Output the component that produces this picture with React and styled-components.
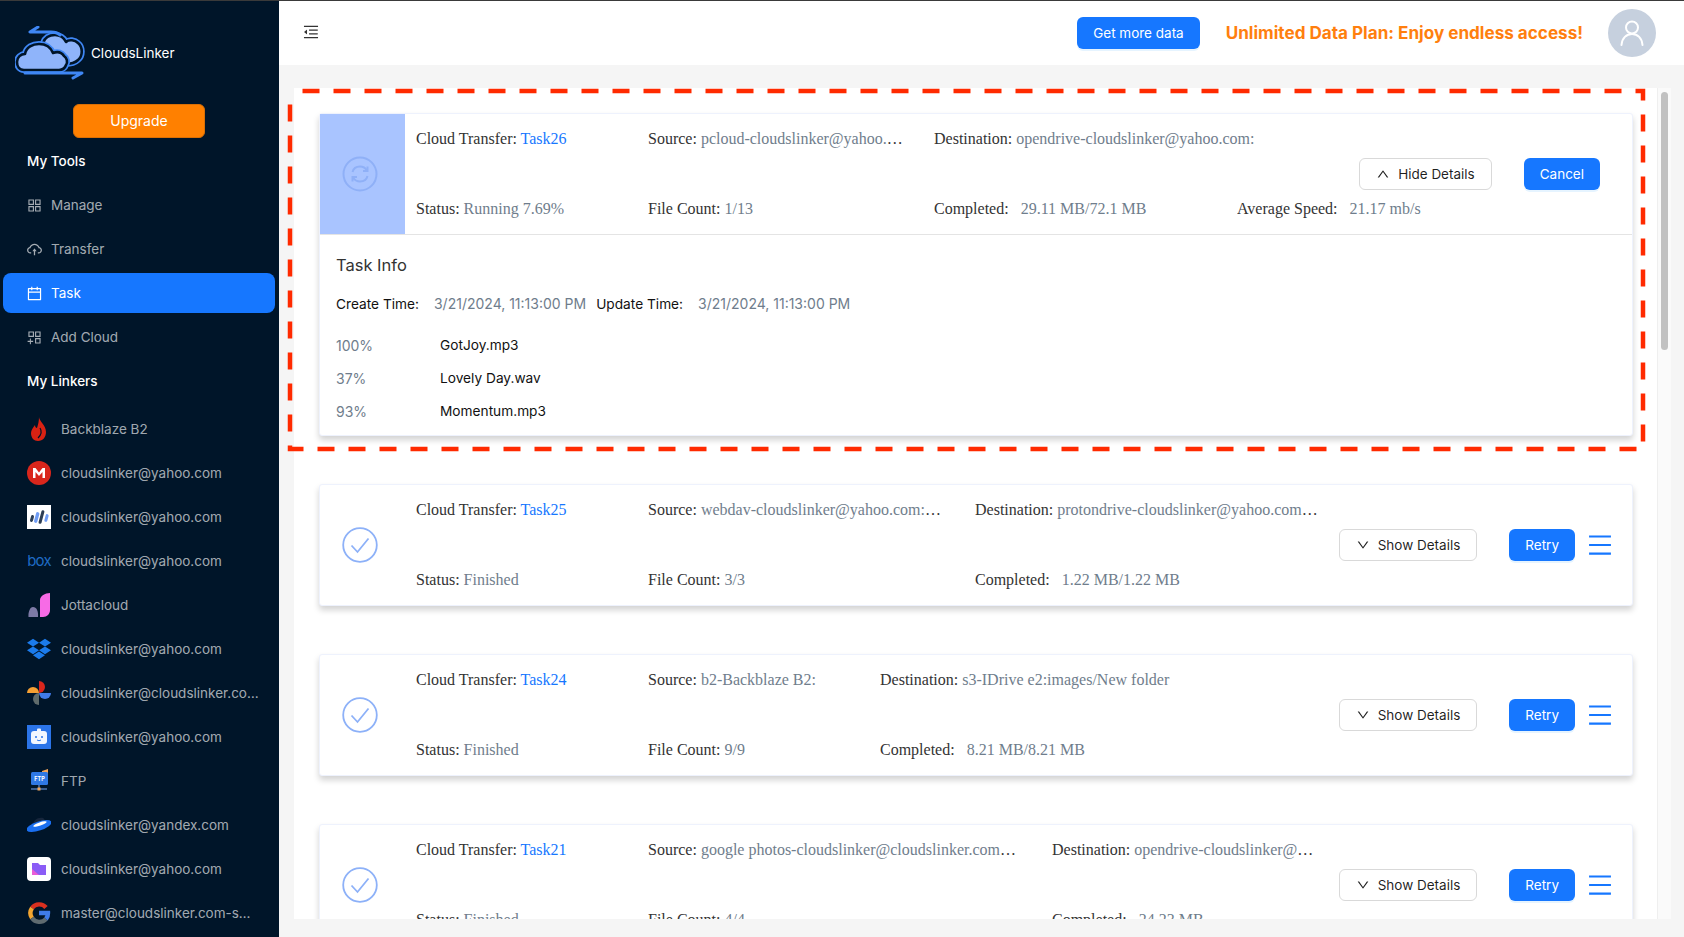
import React from 'react'
import styled, { createGlobalStyle } from 'styled-components'
import { AiOutlineAppstore, AiOutlineCloudUpload, AiOutlineCalendar, AiOutlineAppstoreAdd, AiOutlineMenuFold, AiOutlineUp, AiOutlineDown, AiOutlineMenu } from 'react-icons/ai'
import { FaDropbox } from 'react-icons/fa'

const GlobalStyle = createGlobalStyle`
  * { box-sizing: border-box; }
  html, body { margin: 0; height: 100%; overflow: hidden; }
  body { font-family: Inter, "Liberation Sans", sans-serif; font-size: 13.5px; background: #f5f5f5; }
`

const FRONT_CLOUD = 'M9 44 C4 44 2 40 2 36 C2 31 6 28 10 28 C11 21 18 18 24 18 C31 18 36 22 38 27 C43 25 47 27 49 30 C52 32 53 36 51 39 C50 42 47 44 44 44 Z'
const BACK_CLOUD = 'M28 17 C30 11 35 9 40 9 C45 9 49 12 51 16 C54 13 60 14 63 17 C68 21 68 30 63 34 C60 37 56 38 50 38 L34 38 Z'

const Logo = () => (
  <svg width="72" height="54" viewBox="0 0 72 54" fill="none">
    <path d={BACK_CLOUD} fill="#3f87f5" stroke="#3f87f5" strokeWidth="6" strokeLinejoin="round" />
    <path d={BACK_CLOUD} fill="#8fb4fa" stroke="#001529" strokeWidth="2.6" strokeLinejoin="round" />
    <path d={FRONT_CLOUD} fill="#3f87f5" stroke="#3f87f5" strokeWidth="6" strokeLinejoin="round" />
    <path d={FRONT_CLOUD} fill="#8fb4fa" stroke="#001529" strokeWidth="2.6" strokeLinejoin="round" />
    <path d="M23 1 L15 6 H36 C40 6 43 7 45 9" stroke="#3f87f5" strokeWidth="3" strokeLinecap="round" strokeLinejoin="round" />
    <path d="M10 47 H67 L58 52" stroke="#3f87f5" strokeWidth="3" strokeLinecap="round" strokeLinejoin="round" />
  </svg>
)

const IconBackblaze = () => (
  <svg width="24" height="24" viewBox="0 0 24 24">
    <path d="M12 0 C12 4 19 8 19 15 C19 20 16 24 11 24 C7 24 4 21 4 16 C4 13 6 11 8 8 C8 10 9 11 10 11 C11 8 12 4 12 0 Z" fill="#d92213" />
    <path d="M13 11 C15 14 14 18 11 21" stroke="#001529" strokeWidth="1.2" fill="none" />
  </svg>
)

const IconMega = () => (
  <svg width="24" height="24" viewBox="0 0 24 24">
    <circle cx="12" cy="12" r="12" fill="#d9261c" />
    <path d="M6 17 V7 H8.5 L12 11.5 L15.5 7 H18 V17 H15.5 V11 L12 15 L8.5 11 V17 Z" fill="#fff" />
  </svg>
)

const IconBars = () => (
  <svg width="24" height="24" viewBox="0 0 24 24">
    <rect width="24" height="24" fill="#fff" />
    <rect x="3.5" y="10" width="3" height="7" rx="1.5" fill="#2c3e55" transform="rotate(15 5 13.5)" />
    <rect x="8" y="7" width="3.4" height="11" rx="1.7" fill="#6f9cf4" transform="rotate(15 9.7 12.5)" />
    <rect x="13" y="5" width="3" height="14" rx="1.5" fill="#2c3e55" transform="rotate(15 14.5 12)" />
    <rect x="18" y="9" width="3" height="8" rx="1.5" fill="#6f9cf4" transform="rotate(15 19.5 13)" />
  </svg>
)

const BoxMark = styled.span`
  width: 24px;
  text-align: center;
  font-size: 15px;
  line-height: 24px;
  letter-spacing: -0.8px;
  color: #1f6bc4;
`

const IconJotta = () => (
  <svg width="24" height="24" viewBox="0 0 24 24">
    <path d="M13 7 C13 3 18 0 23 0 V17 C23 21 20 24 16 24 H13 Z" fill="#f76be6" />
    <path d="M1.5 24 C1 19 3 14 6 14 C9.5 14 11.5 18 11 24 Z" fill="#7d7aa6" />
  </svg>
)

const IconPhotos = () => (
  <svg width="24" height="24" viewBox="0 0 24 24">
    <path d="M0 12 A6 6 0 0 1 12 12 Z" fill="#f5a033" />
    <path d="M12 12 A6 6 0 0 0 12 0 Z" fill="#d9261c" />
    <path d="M12 12 A6 6 0 0 0 24 12 Z" fill="#3f7be8" />
    <path d="M12 12 A6 6 0 0 0 12 24 Z" fill="#5f6b6b" />
  </svg>
)

const IconRobot = () => (
  <svg width="24" height="24" viewBox="0 0 24 24">
    <rect width="24" height="24" fill="#2b74e8" />
    <rect x="4" y="6" width="16" height="13" rx="3" fill="#f3f7ff" />
    <rect x="10" y="3.5" width="4" height="4" rx="1" fill="#f3f7ff" />
    <circle cx="9" cy="12" r="1" fill="#2b74e8" />
    <circle cx="15" cy="12" r="1" fill="#2b74e8" />
    <path d="M10 15 Q12 16.5 14 15" stroke="#2b74e8" fill="none" />
  </svg>
)

const IconFtp = () => (
  <svg width="24" height="24" viewBox="0 0 24 24">
    <path d="M15 2 L21 0 V6 H15 Z" fill="#f2a65a" />
    <rect x="4" y="3" width="17" height="13" rx="1.5" fill="#2f78e4" />
    <text x="12.5" y="12" fontSize="5.5" fontWeight="700" fill="#fff" textAnchor="middle" fontFamily="Inter, sans-serif">FTP</text>
    <path d="M12 16 V20 M4 20 H20" stroke="#7aa7f0" strokeWidth="1" />
    <rect x="10.5" y="18.5" width="3" height="3" fill="#f2a65a" />
  </svg>
)

const IconYandex = () => (
  <svg width="24" height="24" viewBox="0 0 24 24">
    <path d="M5 14 C6 7 11 4 16 5 C18 6 18 8 17 9 Z" fill="#16263c" />
    <ellipse cx="12" cy="13" rx="13" ry="4.6" fill="#1a6ff0" transform="rotate(-18 12 13)" />
    <ellipse cx="13" cy="11" rx="7" ry="1.7" fill="#fff" transform="rotate(-18 13 11)" />
  </svg>
)

const IconFolder = () => (
  <svg width="24" height="24" viewBox="0 0 24 24">
    <rect width="24" height="24" rx="4" fill="#fff" />
    <path d="M5 6 H11 L13 8 H19 V18 H5 Z" fill="#8b5cf6" />
    <path d="M5 12 L12 18 H5 Z" fill="#e85cd6" />
  </svg>
)

const IconGoogle = () => (
  <svg width="24" height="24" viewBox="0 0 24 24" fill="none" strokeWidth="4.4">
    <path d="M5 7 A9 9 0 0 1 19 6.5" stroke="#d9301f" />
    <path d="M5 7 A9 9 0 0 0 5 17" stroke="#f3a530" />
    <path d="M5 17 A9 9 0 0 0 19 18" stroke="#5f6b70" />
    <path d="M19 18 A9 9 0 0 0 21 12 H12" stroke="#3f7be8" />
  </svg>
)

const SyncCircle = () => (
  <svg width="36" height="36" viewBox="0 0 36 36" fill="none" stroke="#8fb0f7" strokeWidth="2">
    <circle cx="18" cy="18" r="16.5" />
    <path d="M10.5 16 C11.5 12 15 10.5 18 10.5 C21 10.5 23.5 12 25 14.5" />
    <path d="M25.5 10.5 V15 H21" />
    <path d="M25.5 20 C24.5 24 21 25.5 18 25.5 C15 25.5 12.5 24 11 21.5" />
    <path d="M10.5 25.5 V21 H15" />
  </svg>
)

const CheckCircle = () => (
  <svg width="36" height="36" viewBox="0 0 36 36" fill="none" stroke="#8db1f8" strokeWidth="1.8">
    <circle cx="18" cy="18" r="16.8" />
    <path d="M9.5 18.5 L15.5 25 L26.5 11.5" />
  </svg>
)

const tools = [
  { label: 'Manage', Icon: AiOutlineAppstore },
  { label: 'Transfer', Icon: AiOutlineCloudUpload },
  { label: 'Task', Icon: AiOutlineCalendar, active: true },
  { label: 'Add Cloud', Icon: AiOutlineAppstoreAdd },
]

const linkers = [
  { label: 'Backblaze B2', icon: <IconBackblaze /> },
  { label: 'cloudslinker@yahoo.com', icon: <IconMega /> },
  { label: 'cloudslinker@yahoo.com', icon: <IconBars /> },
  { label: 'cloudslinker@yahoo.com', icon: <BoxMark>box</BoxMark> },
  { label: 'Jottacloud', icon: <IconJotta /> },
  { label: 'cloudslinker@yahoo.com', icon: <FaDropbox size={24} color="#1b7bec" /> },
  { label: 'cloudslinker@cloudslinker.com-photos', icon: <IconPhotos /> },
  { label: 'cloudslinker@yahoo.com', icon: <IconRobot /> },
  { label: 'FTP', icon: <IconFtp /> },
  { label: 'cloudslinker@yandex.com', icon: <IconYandex /> },
  { label: 'cloudslinker@yahoo.com', icon: <IconFolder /> },
  { label: 'master@cloudslinker.com-smtp', icon: <IconGoogle /> },
]

const tasks = [
  {
    name: 'Task25', cols: '232px 327px 379px',
    source: 'webdav-cloudslinker@yahoo.com:/backup/music',
    dest: 'protondrive-cloudslinker@yahoo.com:/backup/music',
    files: '3/3', done: '1.22 MB/1.22 MB',
  },
  {
    name: 'Task24', cols: '232px 232px 400px',
    source: 'b2-Backblaze B2:',
    dest: 's3-IDrive e2:images/New folder',
    files: '9/9', done: '8.21 MB/8.21 MB',
  },
  {
    name: 'Task21', cols: '232px 404px 300px',
    source: 'google photos-cloudslinker@cloudslinker.com:/album/2024',
    dest: 'opendrive-cloudslinker@yahoo.com:/photos',
    files: '4/4', done: '24.23 MB',
  },
]

const files = [
  { pct: '100%', name: 'GotJoy.mp3' },
  { pct: '37%', name: 'Lovely Day.wav' },
  { pct: '93%', name: 'Momentum.mp3' },
]

const Field = ({ label, value, spaced, span, tight }) => (
  <Cell $span={span} $tight={tight}>
    {label}: <Value $spaced={spaced}>{value}</Value>
  </Cell>
)

const App = () => {
  return (
    <Page>
      <GlobalStyle />
      <Sidebar>
        <Brand>
          <Logo />
          <BrandName>CloudsLinker</BrandName>
        </Brand>
        <UpgradeButton>Upgrade</UpgradeButton>
        <Nav>
          <NavTitle>My Tools</NavTitle>
          {tools.map(({ label, Icon, active }) => (
            <NavItem key={label} $active={active}>
              <Icon size={17} />
              {label}
            </NavItem>
          ))}
          <NavTitle>My Linkers</NavTitle>
          <LinkerList>
            {linkers.map((l, i) => (
              <LinkerItem key={i}>
                <LinkerIcon>{l.icon}</LinkerIcon>
                <LinkerLabel>{l.label}</LinkerLabel>
              </LinkerItem>
            ))}
          </LinkerList>
        </Nav>
      </Sidebar>

      <Main>
        <Header>
          <FoldButton><AiOutlineMenuFold size={18} /></FoldButton>
          <HeaderRight>
            <PrimaryButton>Get more data</PrimaryButton>
            <Promo>Unlimited Data Plan: Enjoy endless access!</Promo>
            <Avatar>
              <svg width="26" height="28" viewBox="0 0 26 28" fill="none" stroke="#fff" strokeWidth="2">
                <circle cx="13" cy="8.5" r="6" />
                <path d="M2.5 26 C3 19 7.5 15 13 15 C18.5 15 23 19 23.5 26" strokeLinecap="round" />
              </svg>
            </Avatar>
          </HeaderRight>
        </Header>

        <Content>
          <Panel>
            <TaskCard>
              <CardHead>
                <Thumb $running><SyncCircle /></Thumb>
                <Info $cols="232px 286px 303px auto">
                  <Cell>Cloud Transfer: <TaskLink>Task26</TaskLink></Cell>
                  <Field label="Source" value="pcloud-cloudslinker@yahoo.com:/music/albums" tight />
                  <Field label="Destination" value="opendrive-cloudslinker@yahoo.com:" span />
                  <Field label="Status" value="Running 7.69%" />
                  <Field label="File Count" value="1/13" />
                  <Field label="Completed" value="29.11 MB/72.1 MB" spaced />
                  <Field label="Average Speed" value="21.17 mb/s" spaced />
                </Info>
                <Actions>
                  <OutlineButton><AiOutlineUp size={14} />Hide Details</OutlineButton>
                  <PrimaryButton>Cancel</PrimaryButton>
                </Actions>
              </CardHead>
              <Details>
                <DetailsTitle>Task Info</DetailsTitle>
                <TimeRow>
                  <span>Create Time:</span>
                  <TimeValue>3/21/2024, 11:13:00 PM</TimeValue>
                  <span>Update Time:</span>
                  <TimeValue>3/21/2024, 11:13:00 PM</TimeValue>
                </TimeRow>
                <FileList>
                  {files.map((f) => (
                    <FileRow key={f.name}>
                      <FilePct>{f.pct}</FilePct>
                      <span>{f.name}</span>
                    </FileRow>
                  ))}
                </FileList>
              </Details>
            </TaskCard>

            {tasks.map((t) => (
              <TaskCard key={t.name}>
                <CardHead>
                  <Thumb><CheckCircle /></Thumb>
                  <Info $cols={t.cols}>
                    <Cell>Cloud Transfer: <TaskLink>{t.name}</TaskLink></Cell>
                    <Field label="Source" value={t.source} />
                    <Field label="Destination" value={t.dest} />
                    <Field label="Status" value="Finished" />
                    <Field label="File Count" value={t.files} />
                    <Field label="Completed" value={t.done} spaced />
                  </Info>
                  <Actions $menu>
                    <OutlineButton><AiOutlineDown size={14} />Show Details</OutlineButton>
                    <PrimaryButton>Retry</PrimaryButton>
                    <MenuButton><AiOutlineMenu size={28} /></MenuButton>
                  </Actions>
                </CardHead>
              </TaskCard>
            ))}
          </Panel>
          <ScrollTrack><ScrollThumb /></ScrollTrack>
          <Highlight width="1364" height="368" viewBox="0 0 1364 368" fill="none">
            <rect x="6" y="5" width="1353" height="358" stroke="#ff2a00" strokeWidth="4.5" strokeDasharray="17 14" strokeDashoffset="18.5" />
          </Highlight>
        </Content>
      </Main>
    </Page>
  )
}

export default App

const Page = styled.div`
  display: flex;
  height: 100vh;
  border-top: 1px solid #3a3a3a;
  overflow: hidden;
`
const Sidebar = styled.aside`
  flex: 0 0 279px;
  background: #001529;
  padding: 25px 4px 0 3px;
  display: flex;
  flex-direction: column;
  overflow: hidden;
`
const Brand = styled.div`
  display: flex;
  align-items: center;
  gap: 4px;
  padding-left: 12px;
  height: 54px;
`
const BrandName = styled.span`
  color: #fff;
  font-size: 13.5px;
`
const UpgradeButton = styled.button`
  align-self: center;
  width: 132px;
  height: 34px;
  margin-top: 24px;
  padding-bottom: 2px;
  border: 1px solid #d96f05;
  border-radius: 6px;
  background: #ff8000;
  color: #fff;
  font: 14px Inter, sans-serif;
  flex: none;
`
const Nav = styled.nav`
  display: flex;
  flex-direction: column;
  gap: 4px;
  margin-top: 3px;
`
const NavTitle = styled.div`
  height: 40px;
  padding-left: 24px;
  line-height: 40px;
  color: #fff;
  font-weight: 500;
`
const NavItem = styled.div`
  display: flex;
  align-items: center;
  gap: 8px;
  height: 40px;
  padding-left: 23px;
  border-radius: 8px;
  color: ${(p) => (p.$active ? '#fff' : 'rgba(255, 255, 255, 0.65)')};
  background: ${(p) => (p.$active ? '#1677ff' : 'transparent')};
`
const LinkerList = styled.div`
  display: flex;
  flex-direction: column;
  gap: 4px;
  margin-top: 4px;
`
const LinkerItem = styled.div`
  display: flex;
  align-items: center;
  gap: 10px;
  height: 40px;
  padding: 0 16px 0 24px;
  color: rgba(255, 255, 255, 0.65);
`
const LinkerIcon = styled.span`
  flex: 0 0 24px;
  height: 24px;
  display: flex;
`
const LinkerLabel = styled.span`
  overflow: hidden;
  white-space: nowrap;
  text-overflow: ellipsis;
`
const Main = styled.div`
  flex: 1;
  min-width: 0;
  display: flex;
  flex-direction: column;
`
const Header = styled.header`
  flex: 0 0 64px;
  display: flex;
  align-items: center;
  justify-content: space-between;
  padding: 0 28px 0 23px;
  background: #fff;
`
const FoldButton = styled.span`
  display: flex;
  margin-bottom: 2px;
  color: #333;
`
const HeaderRight = styled.div`
  display: flex;
  align-items: center;
  gap: 25px;
`
const PrimaryButton = styled.button`
  height: 32px;
  padding: 0 16px;
  border: 0;
  border-radius: 6px;
  background: #1677ff;
  color: #fff;
  font: 13.5px Inter, sans-serif;
  box-shadow: 0 2px 0 rgba(5, 145, 255, 0.1);
`
const Promo = styled.span`
  margin: 0 0 2px 1px;
  color: #ff7f0e;
  font-size: 17.1px;
  font-weight: 700;
  white-space: nowrap;
`
const Avatar = styled.div`
  width: 48px;
  height: 48px;
  border-radius: 50%;
  background: #c6d0de;
  display: flex;
  align-items: center;
  justify-content: center;
`
const Content = styled.main`
  position: relative;
  flex: 1;
  min-height: 0;
  display: flex;
  padding: 23px 13px 18px 15px;
  background: #f5f5f5;
`
const Panel = styled.div`
  flex: 1;
  min-width: 0;
  display: flex;
  flex-direction: column;
  gap: 48px;
  padding: 25px 24px 25px 25px;
  background: #fff;
  overflow: hidden;
`
const ScrollTrack = styled.div`
  flex: 0 0 14px;
  padding: 4px 3px;
  background: #fafafa;
  border-left: 1px solid #efefef;
`
const ScrollThumb = styled.div`
  height: 258px;
  border-radius: 4px;
  background: #c1c1c1;
`
const Highlight = styled.svg`
  position: absolute;
  left: 5px;
  top: 21px;
  pointer-events: none;
`
const TaskCard = styled.section`
  flex: none;
  border: 1px solid #eef2fd;
  border-radius: 3px;
  background: #fff;
  box-shadow: 0 4px 6px rgba(0, 0, 0, 0.18);
`
const CardHead = styled.div`
  display: grid;
  grid-template-columns: 85px 1fr auto;
  height: 120px;
`
const Thumb = styled.div`
  grid-column: 1;
  grid-row: 1;
  display: flex;
  align-items: center;
  justify-content: center;
  padding-right: 6px;
  background: ${(p) => (p.$running ? '#a9c4ff' : 'transparent')};
`
const Info = styled.div`
  grid-column: 2 / 4;
  grid-row: 1;
  display: grid;
  grid-template-columns: ${(p) => p.$cols};
  grid-template-rows: 24px 24px;
  align-content: space-between;
  padding: 13px 0 13px 11px;
  font-family: "Liberation Serif", serif;
  font-size: 16px;
  line-height: 24px;
  color: #333;
`
const Cell = styled.div`
  grid-column: ${(p) => (p.$span ? 'span 2' : 'auto')};
  padding-right: ${(p) => (p.$tight ? '30px' : '34px')};
  overflow: hidden;
  white-space: nowrap;
  text-overflow: ellipsis;
`
const Value = styled.span`
  color: #6f7d8c;
  margin-left: ${(p) => (p.$spaced ? '8px' : '0')};
`
const TaskLink = styled.a`
  color: #1677ff;
`
const Actions = styled.div`
  grid-column: 3;
  grid-row: 1;
  align-self: center;
  display: flex;
  align-items: center;
  gap: 32px;
  padding-right: ${(p) => (p.$menu ? '18px' : '32px')};
  z-index: 1;
`
const OutlineButton = styled.button`
  display: flex;
  align-items: center;
  gap: 8px;
  height: 32px;
  padding: 0 16px;
  border: 1px solid #d9d9d9;
  border-radius: 6px;
  background: #fff;
  color: rgba(0, 0, 0, 0.88);
  font: 13.5px Inter, sans-serif;
`
const MenuButton = styled.span`
  display: flex;
  margin-left: -21px;
  color: #1677ff;
`
const Details = styled.div`
  border-top: 1px solid #e4e4e4;
  padding: 15px 16px 7px;
`
const DetailsTitle = styled.div`
  font-size: 16.5px;
  line-height: 30px;
  color: #333;
`
const TimeRow = styled.div`
  display: flex;
  margin-top: 9px;
  line-height: 30px;
  font-size: 13.7px;
  color: #111;
`
const TimeValue = styled.span`
  margin-left: 15px;
  margin-right: 10px;
  font-size: 14px;
  color: #6f7d8c;
`
const FileList = styled.div`
  margin-top: 10px;
`
const FileRow = styled.div`
  display: flex;
  height: 33px;
  line-height: 33px;
  font-size: 13.7px;
  color: #111;
`
const FilePct = styled.span`
  width: 104px;
  font-size: 14px;
  color: #6f7d8c;
`
